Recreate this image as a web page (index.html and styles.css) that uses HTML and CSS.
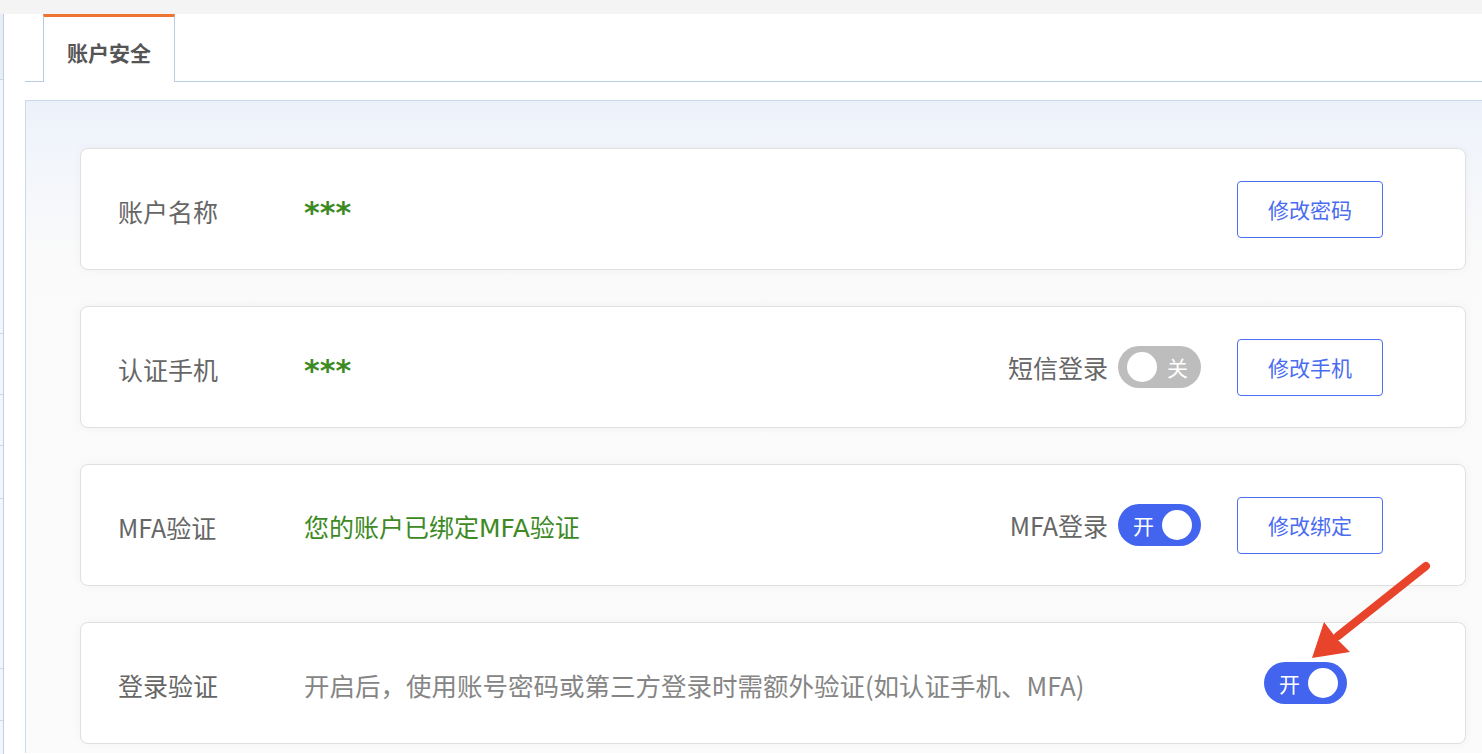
FILE: index.html
```html
<!DOCTYPE html>
<html lang="zh-CN">
    <head>
        <meta charset="UTF-8">
        <meta name="viewport" content="width=device-width, initial-scale=1.0">
        <title>账户安全</title>
        <link rel="stylesheet" href="styles.css">
    </head>
    <body>

        <div class="topbar"></div>

        <div class="layout">
            <aside class="side">
                <div class="side-row h65"></div>
                <div class="side-row h254"></div>
                <div class="side-row h61"></div>
                <div class="side-row h51"></div>
                <div class="side-row h53"></div>
                <div class="side-row h170"></div>
                <div class="side-row h52"></div>
            </aside>

            <main class="main">
                <div class="tabs">
                    <div class="tab active">账户安全</div>
                </div>

                <div class="panel">
                    <div class="card">
                        <span class="label">账户名称</span>
                        <span class="value"><span class="mask">***</span></span>
                        <div class="actions">
                            <button type="button" class="btn">修改密码</button>
                        </div>
                    </div>

                    <div class="card">
                        <span class="label">认证手机</span>
                        <span class="value"><span class="mask">***</span></span>
                        <div class="actions">
                            <span class="opt">短信登录</span>
                            <div class="switch off">
                                <span class="knob"></span>
                                <span class="switch-text">关</span>
                            </div>
                            <button type="button" class="btn">修改手机</button>
                        </div>
                    </div>

                    <div class="card">
                        <span class="label">MFA验证</span>
                        <span class="value">您的账户已绑定MFA验证</span>
                        <div class="actions">
                            <span class="opt">MFA登录</span>
                            <div class="switch on">
                                <span class="switch-text">开</span>
                                <span class="knob"></span>
                            </div>
                            <button type="button" class="btn">修改绑定</button>
                        </div>
                    </div>

                    <div class="card">
                        <span class="label">登录验证</span>
                        <span class="desc">开启后，使用账号密码或第三方登录时需额外验证(如认证手机、MFA)</span>
                        <div class="actions">
                            <div class="switch on lone">
                                <span class="switch-text">开</span>
                                <span class="knob"></span>
                            </div>
                        </div>
                    </div>
                </div>
            </main>
        </div>

        <!-- seta vermelha de destaque -->
        <svg class="arrow" width="1482" height="754" viewBox="0 0 1482 754">
            <line x1="1426" y1="566" x2="1338" y2="636" stroke="#e8432b" stroke-width="8" stroke-linecap="round"/>
            <polygon points="1312,658 1324,622 1337,639 1350,652" fill="#e8432b"/>
        </svg>
    </body>
</html>
```

FILE: styles.css
```css
html, body {
    margin: 0;
    height: 100%;
}

body {
    font-family: "Noto Sans CJK SC", "Noto Sans", sans-serif;
    background-color: #f4f4f4;
    overflow: hidden;
    position: relative;
}

.topbar {
    height: 14px;
    background-color: #f4f4f4;
}

.layout {
    display: flex;
    height: calc(100% - 14px);
    background-color: #fff;
}

/* lateral cortada */
.side {
    width: 3px;
    border-right: 1px solid #bdd0e6;
    background-color: #f2f6fb;
}

.side-row {
    border-bottom: 1px solid #c9d8ea;
    box-sizing: border-box;
}
.h65 { height: 66px; background-color: #e9eef5; }
.h254 { height: 254px; }
.h61 { height: 61px; }
.h51 { height: 51px; }
.h53 { height: 53px; }
.h170 { height: 170px; }
.h52 { height: 52px; }

.main {
    flex: 1;
    padding-left: 21px;
    background-color: #fff;
}

.tabs {
    display: flex;
    height: 67px;
    border-bottom: 1px solid #b9cce1;
}

.tab {
    box-sizing: border-box;
    width: 132px;
    height: 68px;
    margin-left: 18px;
    padding-top: 4px;
    display: flex;
    align-items: center;
    justify-content: center;
    font-size: 21px;
    font-weight: bold;
    color: #555;
    background-color: #fff;
    border: 1px solid #b9cce1;
    border-top: 3px solid #ee7430;
    border-bottom: none;
}

.panel {
    margin-top: 18px;
    padding: 47px 16px 0 54px;
    height: 653px;
    box-sizing: border-box;
    border-top: 1px solid #c9daee;
    border-left: 1px solid #c9daee;
    background-image: linear-gradient(180deg, #ecf1fa 0px, #f3f6fb 60px, #fafafa 160px, #fbfbfb);
}

.card {
    box-sizing: border-box;
    height: 122px;
    margin-bottom: 36px;
    padding: 0 82px 0 37px;
    display: flex;
    align-items: center;
    background-color: #fff;
    border: 1px solid #e0e0e0;
    border-radius: 8px;
    box-shadow: 0 0 10px rgba(0, 0, 0, 0.04);
}

.card:last-child {
    margin-bottom: 0;
}

.label {
    flex: 0 0 186px;
    font-size: 25px;
    color: #666;
    padding-top: 3px;
}

.value {
    flex: 1;
    font-family: "DejaVu Sans", "Noto Sans CJK SC", sans-serif;
    font-size: 25px;
    color: #3d8a24;
    padding-top: 2px;
}

.mask {
    font-size: 30px;
    font-weight: bold;
    position: relative;
    top: 2px;
}

.desc {
    flex: 1;
    font-size: 25.5px;
    color: #858585;
    padding-top: 3px;
}

.actions {
    display: flex;
    align-items: center;
}

.opt {
    font-size: 25px;
    color: #666;
    margin-right: 10px;
}

.btn {
    box-sizing: border-box;
    width: 146px;
    height: 57px;
    margin-left: 36px;
    font-family: inherit;
    font-size: 21px;
    color: #4a6cf0;
    background-color: #fff;
    border: 1px solid #4c6ef5;
    border-radius: 4px;
    cursor: pointer;
}

.switch {
    box-sizing: border-box;
    width: 83px;
    height: 42px;
    display: flex;
    align-items: center;
    border-radius: 21px;
    color: #fff;
}

.switch.off {
    background-color: #bdbdbd;
    padding-left: 9px;
    gap: 10px;
}

.switch.on {
    background-color: #4264ee;
    padding-left: 15px;
    gap: 8px;
}

.switch.lone {
    margin-right: 36px;
}

.knob {
    width: 30px;
    height: 30px;
    border-radius: 50%;
    background-color: #fff;
}

.switch-text {
    font-size: 21px;
    line-height: 1;
}

.arrow {
    position: absolute;
    top: 0;
    left: 0;
    pointer-events: none;
}
```
